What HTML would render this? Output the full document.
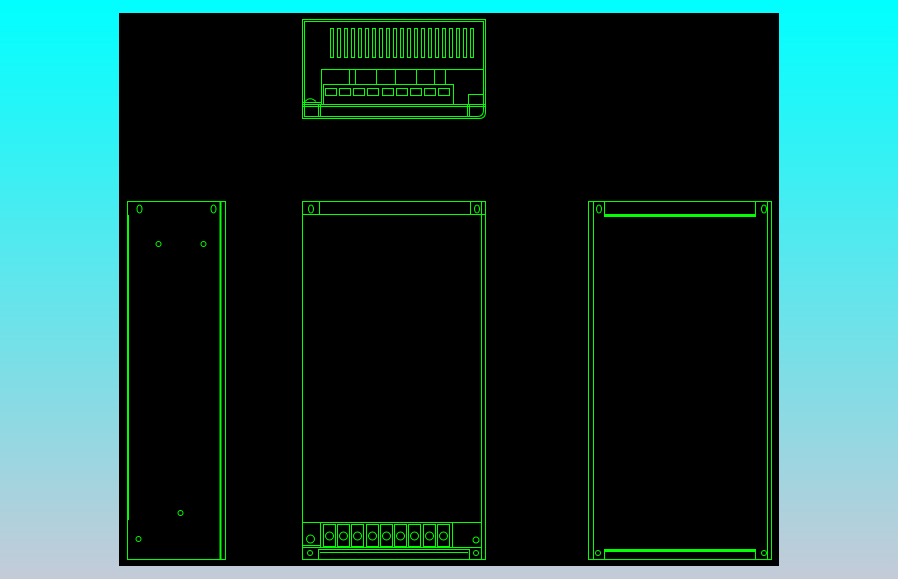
<!DOCTYPE html>
<html><head><style>
html,body{margin:0;padding:0;width:898px;height:579px;overflow:hidden;background:linear-gradient(#00ffff,#c4cbd8);}
svg{position:absolute;left:0;top:0}
</style></head><body>
<svg width="898" height="579" viewBox="0 0 898 579">
<rect x="119" y="13" width="660" height="553" fill="#000"/>
<g fill="none" stroke="#00ff00" stroke-width="1">
<!-- top view -->
<path d="M302.5 19.5H485.5V112Q485.5 118.5 479 118.5H302.5Z"/>
<path d="M304.5 21.5H483.5V110Q483.5 116.5 477 116.5H304.5Z"/>
<g>
<rect x="330.5" y="28.5" width="3" height="29"/><rect x="337.5" y="28.5" width="3" height="29"/><rect x="344.5" y="28.5" width="3" height="29"/><rect x="351.5" y="28.5" width="3" height="29"/><rect x="358.5" y="28.5" width="3" height="29"/><rect x="365.5" y="28.5" width="3" height="29"/><rect x="372.5" y="28.5" width="3" height="29"/><rect x="379.5" y="28.5" width="3" height="29"/><rect x="386.5" y="28.5" width="3" height="29"/><rect x="393.5" y="28.5" width="3" height="29"/><rect x="400.5" y="28.5" width="3" height="29"/><rect x="407.5" y="28.5" width="3" height="29"/><rect x="414.5" y="28.5" width="3" height="29"/><rect x="421.5" y="28.5" width="3" height="29"/><rect x="428.5" y="28.5" width="3" height="29"/><rect x="435.5" y="28.5" width="3" height="29"/><rect x="442.5" y="28.5" width="3" height="29"/><rect x="449.5" y="28.5" width="3" height="29"/><rect x="456.5" y="28.5" width="3" height="29"/><rect x="463.5" y="28.5" width="3" height="29"/><rect x="470.5" y="28.5" width="3" height="29"/>
</g>
<path d="M321.5 104V69.5H483M349.5 69.5V84M355.5 69.5V84M376.5 69.5V84M395.5 69.5V84M416.5 69.5V84M434.5 69.5V84M445.5 69.5V84"/>
<rect x="323.5" y="84.5" width="130" height="20"/>
<g>
<rect x="325.5" y="88.5" width="11" height="7"/><rect x="339.5" y="88.5" width="11" height="7"/><rect x="353.5" y="88.5" width="11" height="7"/><rect x="367.5" y="88.5" width="11" height="7"/><rect x="382.5" y="88.5" width="11" height="7"/><rect x="396.5" y="88.5" width="11" height="7"/><rect x="410.5" y="88.5" width="11" height="7"/><rect x="424.5" y="88.5" width="11" height="7"/><rect x="438.5" y="88.5" width="11" height="7"/>
</g>
<rect x="468.5" y="94.5" width="15" height="10"/>
<path d="M303 102.5H321M303 104.5H485M303 106.5H485M318.5 104V117M320.5 104V117M467.5 104V117M469.5 104V117"/>
<path d="M305 101.5Q310 96 316 101.5" />
<!-- left view -->
<rect x="127.5" y="201.5" width="98" height="358"/>
<path d="M220.5 201V559M128 215V520" stroke-width="2"/>
<ellipse cx="139.5" cy="209" rx="2.5" ry="4"/><ellipse cx="213.5" cy="209" rx="2.5" ry="4"/>
<circle cx="158.5" cy="244" r="2.5"/><circle cx="203.5" cy="244" r="2.5"/><circle cx="180.5" cy="513" r="2.5"/><circle cx="138.5" cy="539" r="2.5"/>
<!-- front view -->
<rect x="302.5" y="201.5" width="183" height="358"/>
<path d="M303 214.5H486M319.5 201V214M470.5 201V214M481.5 201V559"/>
<ellipse cx="311" cy="209" rx="2.5" ry="4"/><ellipse cx="477" cy="209" rx="2.5" ry="4"/>
<rect x="302.5" y="522.5" width="179" height="25"/>
<path d="M320.5 522V547M452.5 522V547M303 545.5H320"/>
<g>
<rect x="323.5" y="524.5" width="12" height="22"/><rect x="337.5" y="524.5" width="12" height="22"/><rect x="351.5" y="524.5" width="12" height="22"/><rect x="366.5" y="524.5" width="12" height="22"/><rect x="380.5" y="524.5" width="12" height="22"/><rect x="394.5" y="524.5" width="12" height="22"/><rect x="408.5" y="524.5" width="12" height="22"/><rect x="423.5" y="524.5" width="12" height="22"/><rect x="437.5" y="524.5" width="12" height="22"/>
<circle cx="329.5" cy="536" r="4"/><circle cx="343.5" cy="536" r="4"/><circle cx="357.5" cy="536" r="4"/><circle cx="372.5" cy="536" r="4"/><circle cx="386.5" cy="536" r="4"/><circle cx="400.5" cy="536" r="4"/><circle cx="414.5" cy="536" r="4"/><circle cx="429.5" cy="536" r="4"/><circle cx="443.5" cy="536" r="4"/>
</g>
<circle cx="310.5" cy="539" r="4"/><circle cx="476" cy="540" r="3"/>
<path d="M318.5 559V549.5H469.5V559M320 552.5H468"/>
<circle cx="310" cy="553" r="2.5"/><circle cx="476" cy="553" r="2.5"/>
<!-- right view -->
<rect x="588.5" y="201.5" width="183" height="358"/>
<path d="M593.5 201V559M767.5 201V559M604.5 201V216M755.5 201V216M604.5 559V549M755.5 559V549"/>
<path d="M604 215.5H756M605 550.5H755" stroke-width="3"/>
<ellipse cx="599" cy="209" rx="2.5" ry="4"/><ellipse cx="764" cy="209" rx="2.5" ry="4"/>
<circle cx="598" cy="553" r="2.5"/><circle cx="764" cy="553" r="2.5"/>
</g>
</svg>
</body></html>
